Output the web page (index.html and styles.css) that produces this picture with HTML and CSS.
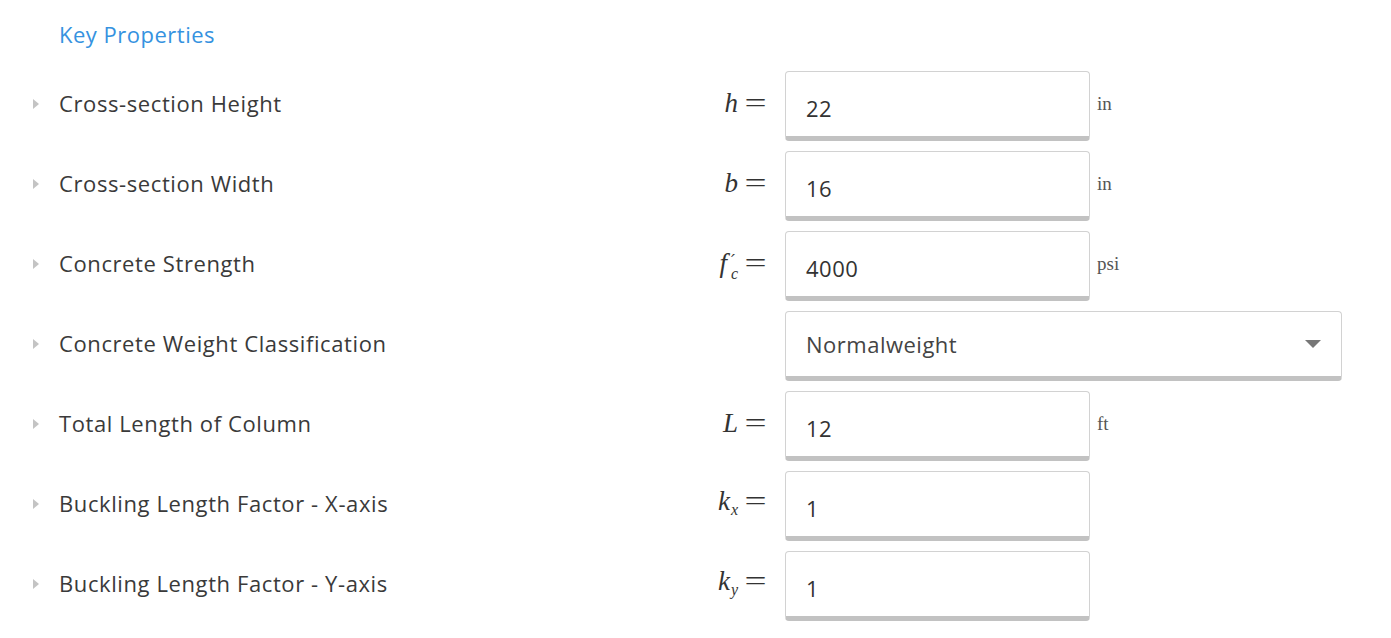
FILE: index.html
```html
<!DOCTYPE html>
<html>
<head>
<meta charset="utf-8">
<link rel="stylesheet" href="styles.css">
</head>
<body>
<div class="panel">
  <div class="section-title">Key Properties</div>
  <div class="rows">
    <div class="row">
      <div class="name"><span class="caret"></span>Cross-section Height</div>
      <div class="sym"><i>h</i><span class="eq">=</span></div>
      <div class="field">22</div>
      <div class="unit">in</div>
    </div>
    <div class="row">
      <div class="name"><span class="caret"></span>Cross-section Width</div>
      <div class="sym"><i>b</i><span class="eq">=</span></div>
      <div class="field">16</div>
      <div class="unit">in</div>
    </div>
    <div class="row">
      <div class="name"><span class="caret"></span>Concrete Strength</div>
      <div class="sym"><i>f</i><span class="supsub"><span class="sup">′</span><i class="sub">c</i></span><span class="eq">=</span></div>
      <div class="field">4000</div>
      <div class="unit">psi</div>
    </div>
    <div class="row">
      <div class="name"><span class="caret"></span>Concrete Weight Classification</div>
      <div class="sym"></div>
      <div class="field select">Normalweight<span class="arrow"></span></div>
    </div>
    <div class="row">
      <div class="name"><span class="caret"></span>Total Length of Column</div>
      <div class="sym"><i>L</i><span class="eq">=</span></div>
      <div class="field">12</div>
      <div class="unit">ft</div>
    </div>
    <div class="row">
      <div class="name"><span class="caret"></span>Buckling Length Factor - X-axis</div>
      <div class="sym"><i>k</i><i class="sub2">x</i><span class="eq">=</span></div>
      <div class="field">1</div>
    </div>
    <div class="row">
      <div class="name"><span class="caret"></span>Buckling Length Factor - Y-axis</div>
      <div class="sym"><i>k</i><i class="sub2">y</i><span class="eq">=</span></div>
      <div class="field">1</div>
    </div>
  </div>
</div>
</body>
</html>
```
FILE: styles.css
```css
html, body {
  margin: 0;
  padding: 0;
  background: #ffffff;
}
body {
  font-family: "Open Sans", "Liberation Sans", sans-serif;
  color: #333333;
}
.panel {
  padding: 19px 0 0 33px;
}
.section-title {
  margin-left: 26px;
  font-size: 22px;
  letter-spacing: 0.5px;
  line-height: 30px;
  color: #3592e0;
}
.rows {
  margin-top: 22px;
  display: flex;
  flex-direction: column;
  gap: 10px;
}
.row {
  display: flex;
  align-items: center;
  height: 70px;
}
.name {
  width: 667px;
  display: flex;
  align-items: center;
  font-size: 22px;
  letter-spacing: 0.6px;
  color: #3a3a3a;
  padding-bottom: 6px;
}
.caret {
  width: 0;
  height: 0;
  border-top: 5px solid transparent;
  border-bottom: 5px solid transparent;
  border-left: 6px solid #c4c4c4;
  margin-right: 20px;
  margin-top: 1px;
}
.sym {
  width: 66px;
  text-align: right;
  font-family: "Liberation Serif", "DejaVu Serif", serif;
  font-size: 27px;
  line-height: 32px;
  color: #333;
  margin-right: 19px;
  padding-bottom: 6px;
  white-space: nowrap;
}
.sym i {
  font-style: italic;
}
.eq {
  display: inline-block;
  margin-left: 7px;
  width: 21px;
  text-align: center;
  transform: scaleX(1.45);
  transform-origin: center;
}
.supsub {
  display: inline-block;
  vertical-align: -7px;
  line-height: 13px;
  margin-left: 4px;
  text-align: left;
}
.sup {
  display: block;
  font-family: "DejaVu Sans", sans-serif;
  font-size: 18px;
  font-style: italic;
}
.sub {
  display: block;
  font-size: 16px;
  font-style: italic;
}
.sub2 {
  font-size: 16px;
  position: relative;
  top: 5px;
  margin-left: 1px;
}
.field {
  box-sizing: border-box;
  width: 305px;
  height: 70px;
  border: 1px solid #d2d2d2;
  border-bottom: 5px solid #c2c2c2;
  border-radius: 4px;
  padding: 7px 0 0 20px;
  display: flex;
  align-items: center;
  font-size: 22px;
  letter-spacing: 0.5px;
  color: #333;
  background: #fff;
}
.field.select {
  width: 557px;
  justify-content: space-between;
  padding: 0 20px 0 20px;
  color: #444;
}
.arrow {
  width: 0;
  height: 0;
  border-left: 8px solid transparent;
  border-right: 8px solid transparent;
  border-top: 8px solid #777;
}
.unit {
  align-self: flex-start;
  margin-top: 22px;
  margin-left: 7px;
  font-family: "Liberation Serif", "DejaVu Serif", serif;
  font-size: 19px;
  color: #555;
}
```
